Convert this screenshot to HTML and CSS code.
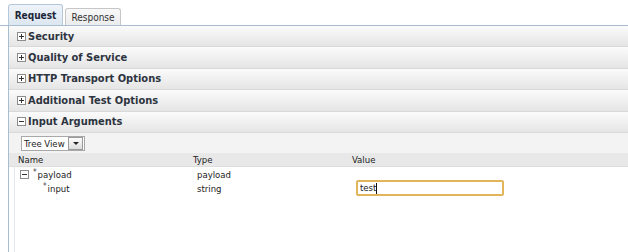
FILE: index.html
```html
<!DOCTYPE html>
<html lang="en">
<head>
  <meta charset="UTF-8" />
  <title>Test Web Service</title>
  <link rel="stylesheet" href="styles.css">
</head>
<body>
  <div class="tabs">
    <div class="tab active">Request</div>
    <div class="tab">Response</div>
  </div>
  <div class="panel">
    <div class="section"><span class="toggle plus"></span>Security</div>
    <div class="section"><span class="toggle plus"></span>Quality of Service</div>
    <div class="section"><span class="toggle plus"></span>HTTP Transport Options</div>
    <div class="section"><span class="toggle plus"></span>Additional Test Options</div>
    <div class="section"><span class="toggle"></span>Input Arguments</div>

    <div class="toolbar">
      <div class="select">
        <span class="select-label">Tree View</span>
        <span class="select-btn"></span>
      </div>
    </div>

    <div class="grid-head">
      <div class="col-name">Name</div>
      <div class="col-type">Type</div>
      <div class="col-value">Value</div>
    </div>
    <div class="grid-body">
      <div class="row">
        <div class="col-name"><span class="toggle tree"></span><span class="req">*</span>payload</div>
        <div class="col-type">payload</div>
        <div class="col-value"></div>
      </div>
      <div class="row">
        <div class="col-name child"><span class="req">*</span>input</div>
        <div class="col-type">string</div>
        <div class="col-value"><div class="field">test<span class="caret"></span></div></div>
      </div>
    </div>
  </div>
</body>
</html>
```

FILE: styles.css
```css
body {
  margin: 0;
  font-family: "DejaVu Sans Condensed", "DejaVu Sans", sans-serif;
  font-stretch: condensed;
  font-size: 9.5px;
  color: #1f2b3a;
  background: #fff;
  width: 628px;
  height: 252px;
  overflow: hidden;
}
.tabs {
  display: flex;
  align-items: flex-end;
  gap: 2px;
  padding: 4px 0 0 8px;
  border-bottom: 1px solid #a9bdd1;
  height: 21px;
}
.tab {
  height: 17px;
  width: 56px;
  box-sizing: border-box;
  text-align: center;
  line-height: 17px;
  font-size: 10px;
  color: #333;
  background: linear-gradient(#f9f9f9, #ececec);
  border: 1px solid #c6c6c6;
  border-bottom: none;
  border-radius: 3px 3px 0 0;
}
.tab.active {
  height: 21px;
  width: 55px;
  line-height: 22px;
  font-weight: bold;
  color: #1b2637;
  background: linear-gradient(#eef3f9, #dde7f1);
  border-color: #b5c7d9;
}
.panel {
  margin-left: 8px;
  border-left: 1px solid #a9bdd1;
  height: 226px;
}
.section {
  display: flex;
  align-items: center;
  height: 20.4px;
  padding-left: 8px;
  font-weight: bold;
  font-size: 11px;
  color: #2d3440;
  background: linear-gradient(#fbfbfb, #e5e5e5);
  border-bottom: 1px solid #d9d9d9;
}
.toggle {
  position: relative;
  flex: none;
  width: 7px;
  height: 7px;
  margin-right: 2px;
  border: 1px solid #8c8c8c;
  background: #fff;
}
.toggle::before,
.toggle.plus::after {
  content: "";
  position: absolute;
  background: #333;
}
.toggle::before {
  left: 1px;
  top: 3px;
  width: 5px;
  height: 1px;
}
.toggle.plus::after {
  left: 3px;
  top: 1px;
  width: 1px;
  height: 5px;
}
.toolbar {
  height: 20px;
  padding: 3px 0 0 12px;
  box-sizing: border-box;
  background: #f3f3f3;
}
.select {
  display: inline-flex;
  align-items: center;
  height: 13px;
  border: 1px solid #a8a8a8;
  background: #fff;
}
.select-label {
  padding: 0 3px 0 2px;
  color: #222;
}
.select-btn {
  position: relative;
  width: 13px;
  height: 11px;
  margin-right: 1px;
  border: 1px solid #9a9a9a;
  background: linear-gradient(#fdfdfd, #dcdcdc);
}
.select-btn::after {
  content: "";
  position: absolute;
  left: 4px;
  top: 4px;
  border-left: 3px solid transparent;
  border-right: 3px solid transparent;
  border-top: 3px solid #222;
}
.grid-head {
  display: flex;
  height: 13px;
  line-height: 14px;
  background: #e8e8e8;
  border-bottom: 1px solid #dedede;
  color: #222;
}
.grid-head .col-name {
  width: 178px;
  padding-left: 9px;
}
.grid-head .col-type {
  width: 165px;
  padding-left: 6px;
}
.col-name,
.col-type {
  flex: none;
  box-sizing: border-box;
}
.col-value {
  flex: 1;
}
.grid-body {
  margin-left: 5px;
  border-left: 1px solid #e3e6ea;
  height: 85px;
  padding-top: 1px;
}
.row {
  display: flex;
  height: 14px;
  line-height: 14px;
  color: #222;
}
.row .col-name {
  display: flex;
  align-items: center;
  width: 176px;
  padding-left: 5px;
}
.row .col-name.child {
  padding-left: 28px;
}
.row .col-type {
  width: 164px;
  padding-left: 6px;
}
.toggle.tree {
  margin-right: 4px;
}
.req {
  align-self: flex-start;
  font-size: 8px;
  line-height: 9px;
  margin-right: 1px;
  color: #444;
}
.field {
  position: relative;
  top: -2px;
  width: 140px;
  height: 12px;
  line-height: 12px;
  margin-left: 1px;
  padding: 0 2px;
  border: 2px solid #e3b55a;
  border-radius: 2px;
  color: #222;
}
.caret {
  display: inline-block;
  width: 1px;
  height: 11px;
  background: #111;
  vertical-align: middle;
}
```
